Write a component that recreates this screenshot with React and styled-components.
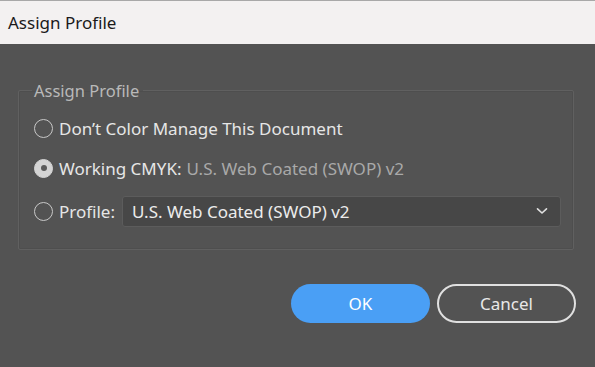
import React, { useState } from "react";
import styled, { createGlobalStyle } from "styled-components";

const GlobalStyle = createGlobalStyle`
  html, body {
    margin: 0;
    padding: 0;
    background: #535353;
  }
  body {
    font-family: "Noto Sans", "Open Sans", sans-serif;
  }
`;

const Window = styled.div`
  width: 595px;
  height: 367px;
  display: flex;
  flex-direction: column;
  background: #535353;
  border-top: 1px solid #a8a8a8;
  box-sizing: border-box;
`;

const TitleBar = styled.div`
  height: 43px;
  background: #f3f1f1;
  display: flex;
  align-items: center;
  padding-left: 8px;
  font-size: 17px;
  color: #1a1a1a;
`;

const Body = styled.div`
  flex: 1;
  padding: 35px 21px 0 18px;
  display: flex;
  flex-direction: column;
`;

const Group = styled.fieldset`
  margin: 0;
  padding: 6px 12px 15px 15px;
  border: 1px solid #606060;
  border-radius: 2px;
  box-shadow: inset 0 0 0 1px #4e4e4e;
  display: flex;
  flex-direction: column;
`;

const Legend = styled.legend`
  padding: 0 4px 0 2px;
  margin-left: -2px;
  font-size: 16.5px;
  color: #b9b9b9;
`;

const Row = styled.label`
  display: flex;
  align-items: center;
  height: ${(p) => p.$h || 40}px;
  gap: 6px;
  font-size: 17px;
  color: #e6e6e6;
  cursor: default;
`;

const Radio = styled.span`
  width: 19px;
  height: 19px;
  border-radius: 50%;
  border: 1.5px solid #c8c8c8;
  box-sizing: border-box;
  display: flex;
  align-items: center;
  justify-content: center;
  flex-shrink: 0;
  background: ${(p) => (p.$checked ? "#d4d4d4" : "transparent")};
  border-color: ${(p) => (p.$checked ? "#d4d4d4" : "#c8c8c8")};

  &::after {
    content: "";
    width: 6px;
    height: 6px;
    border-radius: 50%;
    background: #5a5a5a;
    display: ${(p) => (p.$checked ? "block" : "none")};
  }
`;

const Muted = styled.span`
  color: #a9a9a9;
  margin-left: -1px;
`;

const Select = styled.div`
  flex: 1;
  height: 31px;
  margin-left: 1px;
  background: #474747;
  border: 1px solid #5c5c5c;
  border-radius: 3px;
  box-sizing: border-box;
  display: flex;
  align-items: center;
  justify-content: space-between;
  padding: 0 12px 0 9px;
  color: #ececec;
  font-size: 17px;
`;

const Actions = styled.div`
  display: flex;
  justify-content: flex-end;
  gap: 7px;
  margin-top: 34px;
  margin-right: -2px;
`;

const Button = styled.button`
  width: 139px;
  height: 39px;
  border-radius: 20px;
  box-sizing: border-box;
  font-family: inherit;
  font-size: 17px;
  cursor: pointer;
  color: ${(p) => (p.$primary ? "#ffffff" : "#e8e8e8")};
  background: ${(p) => (p.$primary ? "#4a9ff5" : "transparent")};
  border: ${(p) => (p.$primary ? "none" : "2px solid #e0e0e0")};
`;

const Chevron = () => (
  <svg width="12" height="8" viewBox="0 0 12 8" fill="none">
    <path d="M1.5 1.8 L6 6 L10.5 1.8" stroke="#e0e0e0" strokeWidth="1.6" strokeLinecap="round" strokeLinejoin="round" />
  </svg>
);

const App = () => {
  const [choice, setChoice] = useState("working");

  return (
    <Window>
      <GlobalStyle />
      <TitleBar>Assign Profile</TitleBar>
      <Body>
        <Group>
          <Legend>Assign Profile</Legend>
          <Row $h={40} onClick={() => setChoice("none")}>
            <Radio $checked={choice === "none"} />
            Don’t Color Manage This Document
          </Row>
          <Row $h={40} onClick={() => setChoice("working")}>
            <Radio $checked={choice === "working"} />
            Working CMYK:<Muted>U.S. Web Coated (SWOP) v2</Muted>
          </Row>
          <Row $h={46} onClick={() => setChoice("profile")}>
            <Radio $checked={choice === "profile"} />
            Profile:
            <Select>
              U.S. Web Coated (SWOP) v2
              <Chevron />
            </Select>
          </Row>
        </Group>
        <Actions>
          <Button $primary>OK</Button>
          <Button>Cancel</Button>
        </Actions>
      </Body>
    </Window>
  );
};

export default App;
